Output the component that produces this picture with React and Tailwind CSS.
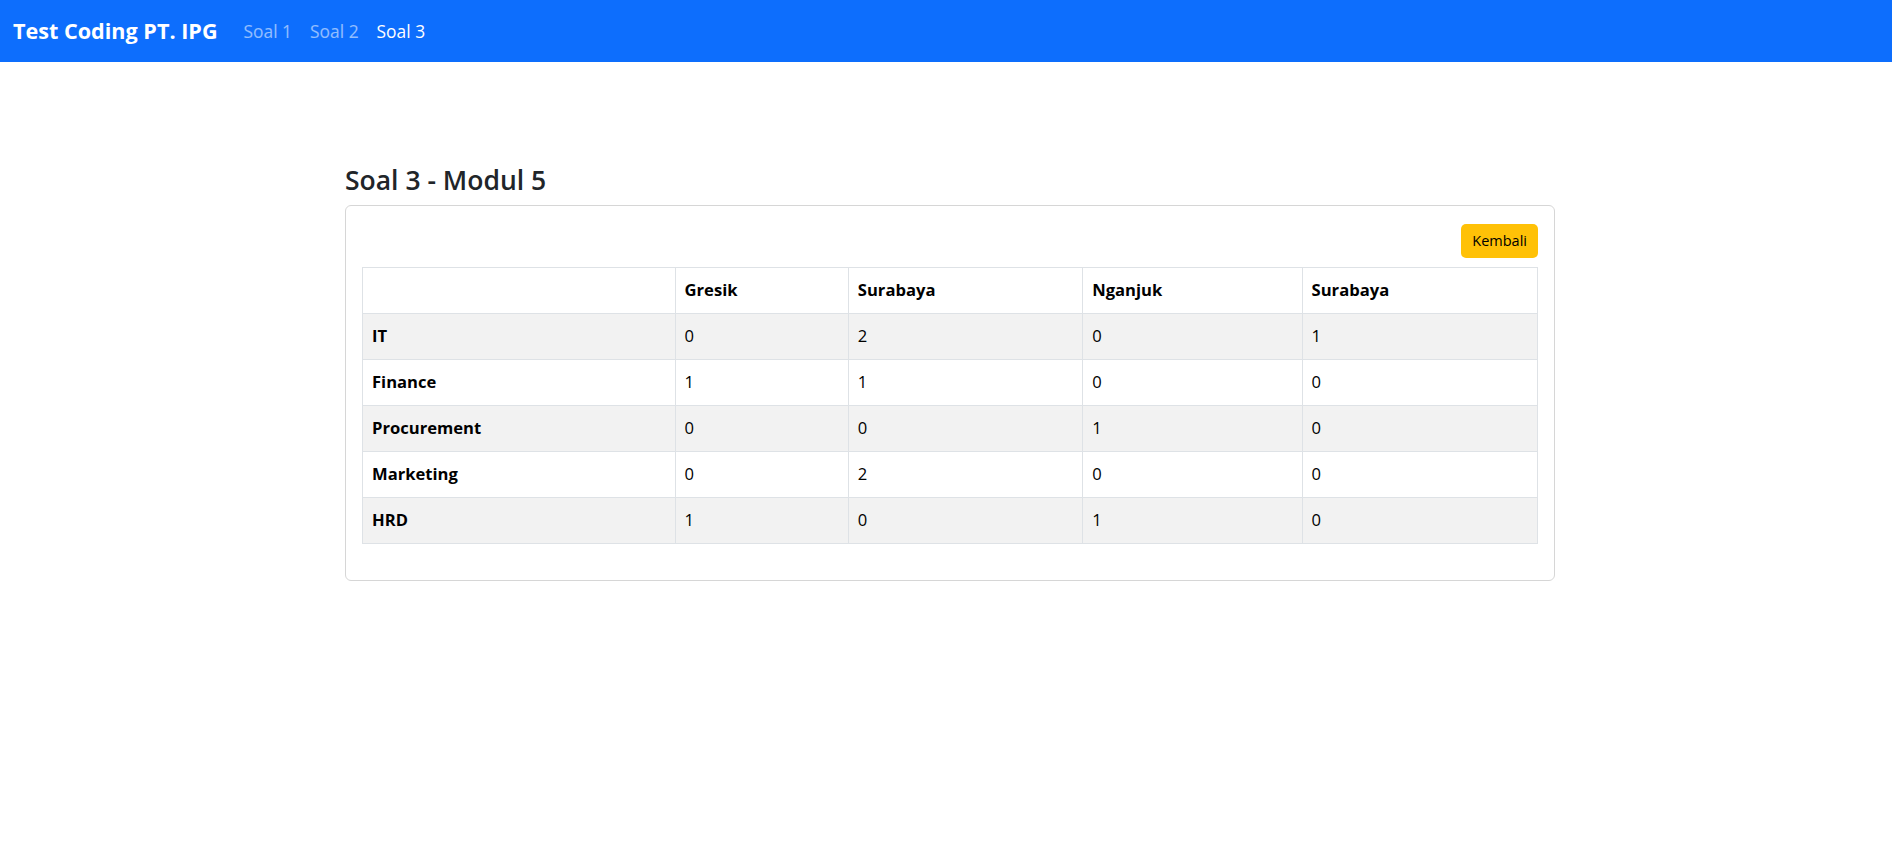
import React from "react";

const cols = ["Gresik", "Surabaya", "Nganjuk", "Surabaya"];

const rows = [
  { name: "IT", values: [0, 2, 0, 1] },
  { name: "Finance", values: [1, 1, 0, 0] },
  { name: "Procurement", values: [0, 0, 1, 0] },
  { name: "Marketing", values: [0, 2, 0, 0] },
  { name: "HRD", values: [1, 0, 1, 0] },
];

const colWidths = ["w-[312px]", "w-[173px]", "w-[234px]", "w-[219px]", "w-[235px]"];

const Navbar = () => (
  <nav className="h-[62px] bg-[#0d6efd] flex items-center pl-[13px]">
    <span className="text-white font-bold text-[21.6px] mr-[17px]">
      Test Coding PT. IPG
    </span>
    <a className="px-[9px] text-white/55 text-[17.4px]">Soal 1</a>
    <a className="px-[9px] text-white/55 text-[17.4px]">Soal 2</a>
    <a className="px-[9px] text-white text-[17.4px]">Soal 3</a>
  </nav>
);

export default function App() {
  return (
    <div className="min-h-screen bg-white text-[#212529] font-['Open_Sans',sans-serif]">
      <Navbar />

      <div className="mx-auto w-[1216px] pl-[7px] pt-[103px]">
        <h4 className="text-[26.5px] font-semibold leading-[1.2] mb-[8px] text-[#212529]">
          Soal 3 - Modul 5
        </h4>

        <div className="w-[1210px] border border-[#d6d6d6] rounded-[6px] px-4 pt-[18px] pb-[36px]">
          <div className="flex justify-end mb-[9px]">
            <button className="h-[34px] px-[11px] bg-[#ffc107] text-black text-[14.5px] rounded-[5px]">
              Kembali
            </button>
          </div>

          {/* tabel rekap per departemen */}
          <table className="w-full border-collapse text-[16.6px] text-black">
            <thead>
              <tr className="h-[46px]">
                <th className={`${colWidths[0]} border border-[#dee2e6] px-[9px] text-left align-middle`}></th>
                {cols.map((c, i) => (
                  <th
                    key={i}
                    className={`${colWidths[i + 1]} border border-[#dee2e6] px-[9px] text-left align-middle font-bold`}
                  >
                    {c}
                  </th>
                ))}
              </tr>
            </thead>
            <tbody>
              {rows.map((row, idx) => (
                <tr
                  key={row.name}
                  className={`h-[46px] ${idx % 2 === 0 ? "bg-[#f2f2f2]" : "bg-white"}`}
                >
                  <th className="border border-[#dee2e6] px-[9px] text-left align-middle font-bold">
                    {row.name}
                  </th>
                  {row.values.map((v, i) => (
                    <td key={i} className="border border-[#dee2e6] px-[9px] align-middle">
                      {v}
                    </td>
                  ))}
                </tr>
              ))}
            </tbody>
          </table>
        </div>
      </div>
    </div>
  );
}
